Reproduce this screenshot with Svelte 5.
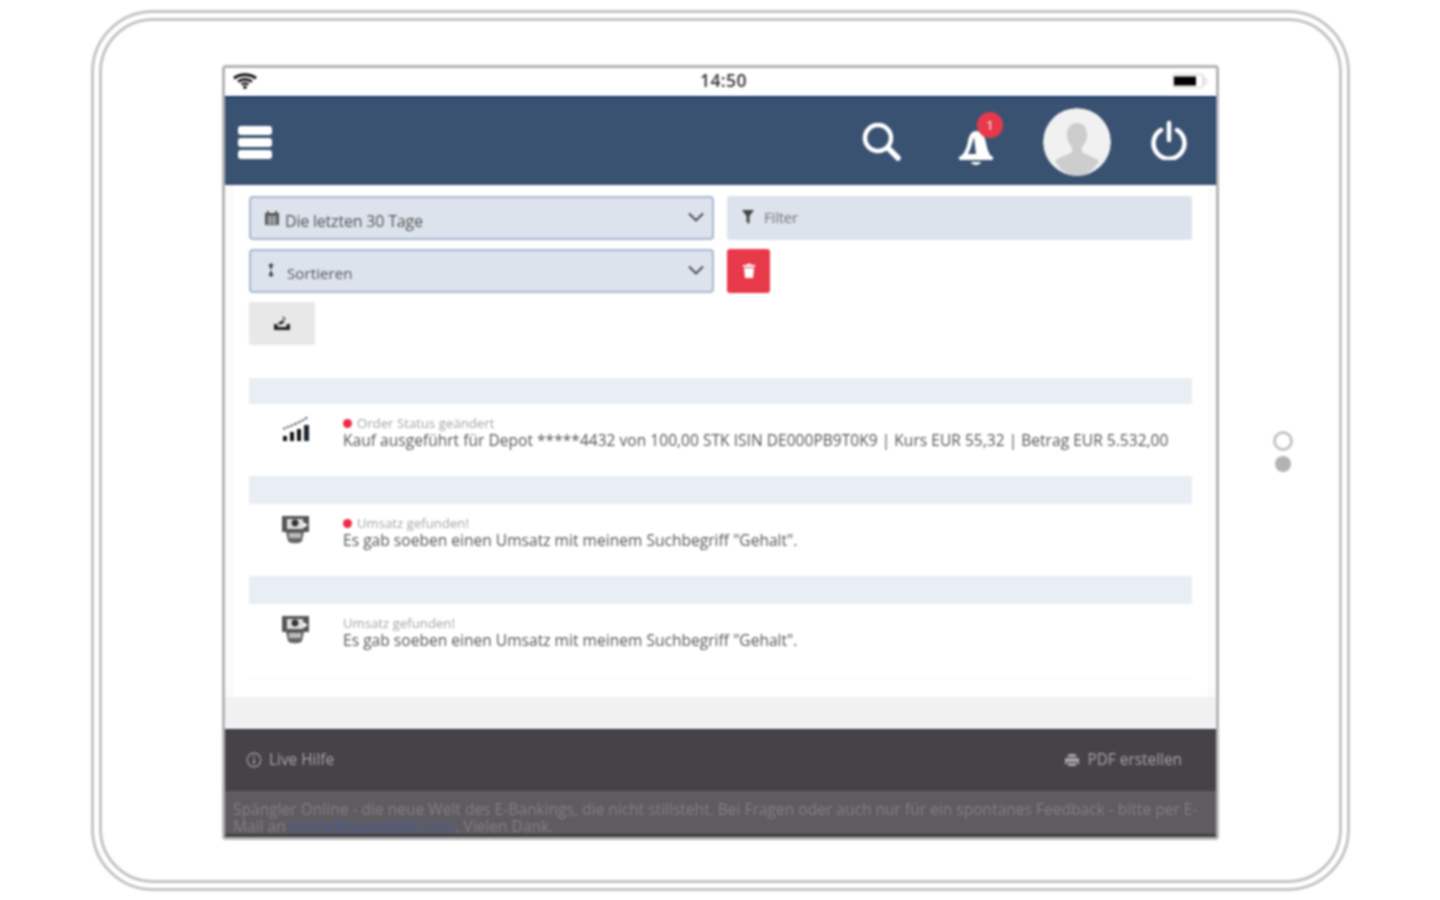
<script>
  const rows = [
    { unread: true, icon: 'chart', label: 'Order Status geändert', text: 'Kauf ausgeführt für Depot *****4432 von 100,00 STK ISIN DE000PB9T0K9 | Kurs EUR 55,32 | Betrag EUR 5.532,00' },
    { unread: true, icon: 'bank', label: 'Umsatz gefunden!', text: 'Es gab soeben einen Umsatz mit meinem Suchbegriff "Gehalt".' },
    { unread: false, icon: 'bank', label: 'Umsatz gefunden!', text: 'Es gab soeben einen Umsatz mit meinem Suchbegriff "Gehalt".' }
  ];
</script>

<div class="page">
  <div class="outer">
    <div class="inner">
      <div class="screen">
        <div class="status">
          <svg class="wifi" viewBox="0 0 24 16" width="24" height="16" aria-hidden="true">
            <path d="M1 5.2C7 .5 17 .5 23 5.2" fill="none" stroke="#111" stroke-width="3"/>
            <path d="M5 8.6C9 5.6 15 5.6 19 8.6" fill="none" stroke="#111" stroke-width="2.8"/>
            <path d="M8.5 11.4C10.6 10.2 13.4 10.2 15.5 11.4" fill="none" stroke="#111" stroke-width="2.4"/>
            <circle cx="12" cy="14.2" r="1.8" fill="#111"/>
          </svg>
          <span class="time">14:50</span>
          <svg class="battery" viewBox="0 0 38 16" width="38" height="16" aria-hidden="true">
            <rect x="1" y="1.5" width="30" height="13" rx="2" fill="#fff" stroke="#ddd" stroke-width="1.5"/>
            <rect x="2" y="3.5" width="22" height="9" fill="#000"/>
            <path d="M32 4l4 4-4 4z" fill="#fff" stroke="#ccc"/>
          </svg>
        </div>

        <header class="topbar">
          <div class="burger"><i></i><i></i><i></i></div>
          <div class="actions">
            <svg class="search" viewBox="0 0 40 40" width="40" height="40" aria-hidden="true">
              <circle cx="17" cy="16" r="13" fill="none" stroke="#fff" stroke-width="4.5"/>
              <path d="M27 26l10 10" stroke="#fff" stroke-width="5.5" stroke-linecap="round"/>
            </svg>
            <div class="bell">
              <svg viewBox="0 0 36 42" width="36" height="42" aria-hidden="true">
                <path d="M2 32c4-3 7-9 8-16 1-6 4-10 8-10 5 0 9 5 10 12 1 6 3 11 6 14z" fill="#fff"/>
                <path d="M16 12c-2 6-3 11-6 17h8z" fill="#3a5272"/>
                <rect x="1" y="31" width="34" height="4" rx="1.5" fill="#fff"/>
                <path d="M13 37h10c-1 4-9 4-10 0z" fill="#fff"/>
              </svg>
              <span class="badge">1</span>
            </div>
            <div class="avatar">
              <svg viewBox="0 0 68 68" width="68" height="68" aria-hidden="true">
                <circle cx="34" cy="34" r="34" fill="#f1f1f1"/>
                <path d="M34 15c-7 0-10 5-10 12 0 5 2 9 5 12v5c-4 3-13 5-17 9 5 9 13 15 22 15s17-6 22-15c-4-4-13-6-17-9v-5c3-3 5-7 5-12 0-7-3-12-10-12z" fill="#cdcdcd"/>
              </svg>
            </div>
            <svg class="power" viewBox="0 0 38 40" width="38" height="40" aria-hidden="true">
              <path d="M11 10a15.5 15.5 0 1 0 16 0" fill="none" stroke="#fff" stroke-width="4.5" stroke-linecap="round"/>
              <path d="M19 3v17" stroke="#fff" stroke-width="4.5" stroke-linecap="round"/>
            </svg>
          </div>
        </header>

        <main class="content">
          <div class="panel">
            <div class="controls">
              <div class="select">
                <svg viewBox="0 0 16 16" width="16" height="16" aria-hidden="true">
                  <path d="M1 3h14v12H1z" fill="#555"/>
                  <path d="M4 1v3M12 1v3" stroke="#555" stroke-width="2"/>
                  <path d="M3 7h10M3 10h10M3 13h10M6 6v8M10 6v8" stroke="#cfd4dc" stroke-width="1"/>
                </svg>
                <span class="sel-a">Die letzten 30 Tage</span>
                <svg class="chev" viewBox="0 0 16 10" width="16" height="10" aria-hidden="true"><path d="M1 1.5l7 7 7-7" fill="none" stroke="#444" stroke-width="1.8"/></svg>
              </div>
              <div class="filter">
                <svg viewBox="0 0 12 14" width="12" height="14" aria-hidden="true"><path d="M0 0h12L7.5 6v8l-3-2V6z" fill="#444"/></svg>
                <span>Filter</span>
              </div>
              <div class="select">
                <svg class="sort" viewBox="0 0 8 14" width="8" height="14" aria-hidden="true"><path d="M4 0l3 3H5v3H3V3H1zM4 14l3-3H5V8H3v3H1z" fill="#333"/></svg>
                <span class="sel-b">Sortieren</span>
                <svg class="chev" viewBox="0 0 16 10" width="16" height="10" aria-hidden="true"><path d="M1 1.5l7 7 7-7" fill="none" stroke="#444" stroke-width="1.8"/></svg>
              </div>
              <div class="trash">
                <svg viewBox="0 0 14 15" width="14" height="15" aria-hidden="true"><path d="M1 2h4V.8h4V2h4v2H1zM2 5h10l-1 10H3z" fill="#fff"/></svg>
              </div>
              <div class="tool">
                <svg viewBox="0 0 18 16" width="18" height="16" aria-hidden="true">
                  <path d="M1 9h3l1 3h8l1-3h3v6H1z" fill="#222"/>
                  <path d="M5 8l5-3 1.5 2.5-5 2.5zM9 1l4 3-2 1z" fill="#222"/>
                </svg>
              </div>
            </div>

            <div class="list">
              {#each rows as row, i}
                <div class="band" class:tall={i > 0}></div>
                <div class="row">
                  <div class="ico">
                    {#if row.icon === 'chart'}
                      <svg viewBox="0 0 30 28" width="30" height="28" aria-hidden="true">
                        <path d="M2 14C10 11 18 8 27 2" fill="none" stroke="#555" stroke-width="1.6" stroke-dasharray="3 1"/>
                        <rect x="2" y="21" width="4" height="5" fill="#111"/>
                        <rect x="9" y="17" width="4" height="9" fill="#111"/>
                        <rect x="16" y="14" width="4" height="12" fill="#111"/>
                        <rect x="23" y="10" width="5" height="16" fill="#1d2730"/>
                      </svg>
                    {:else}
                      <svg viewBox="0 0 30 30" width="30" height="30" aria-hidden="true">
                        <rect x="1" y="1" width="27" height="16" fill="#555"/>
                        <rect x="6" y="4" width="16" height="10" fill="#ddd"/>
                        <circle cx="14" cy="8" r="3.4" fill="#333"/>
                        <path d="M22 7l5 3-5 3z" fill="#fff"/>
                        <path d="M5 17h18l-2 9c-1 3-13 3-14 0z" fill="#666"/>
                        <rect x="8" y="18" width="12" height="5" fill="#bbb"/>
                      </svg>
                    {/if}
                  </div>
                  <div class="txt">
                    <div class="label">{#if row.unread}<span class="dot"></span>{/if}{row.label}</div>
                    <div class="body">{row.text}</div>
                  </div>
                </div>
              {/each}
              <div class="rule"></div>
            </div>
          </div>
        </main>

        <footer class="foot">
          <div class="foot-item">
            <svg viewBox="0 0 16 16" width="16" height="16" aria-hidden="true">
              <circle cx="8" cy="8" r="6.8" fill="none" stroke="#a5a3a6" stroke-width="1.2"/>
              <path d="M8 4v1.6M8 7v5" stroke="#a5a3a6" stroke-width="1.6"/>
            </svg>
            <span>Live Hilfe</span>
          </div>
          <div class="foot-item">
            <svg viewBox="0 0 16 14" width="16" height="14" aria-hidden="true">
              <path d="M4 1h8v3H4zM1 5h14v6h-2V9H3v2H1zM4 10h8v3H4z" fill="#a5a3a6"/>
            </svg>
            <span>PDF erstellen</span>
          </div>
        </footer>
        <div class="note">Spängler Online - die neue Welt des E-Bankings, die nicht stillsteht. Bei Fragen oder auch nur für ein spontanes Feedback - bitte per E-Mail an <a href="#top">online@spaengler.com</a>. Vielen Dank.</div>
      </div>

      <div class="home"><span class="ring"></span><span class="disc"></span></div>
    </div>
  </div>
</div>

<style>
  :global(body) { margin: 0; background: #fff; }
  * { box-sizing: border-box; }
  .page {
    width: 1440px;
    height: 900px;
    padding: 10px 0 0 91px;
    overflow: hidden;
    font-family: "Open Sans", "Liberation Sans", sans-serif;
    filter: blur(0.8px);
  }
  .outer {
    width: 1259px;
    height: 881px;
    border: 3px solid #c4c4c4;
    border-radius: 62px;
    padding: 5px;
  }
  .inner {
    height: 100%;
    border: 3px solid #c4c4c4;
    border-radius: 54px;
    display: flex;
    align-items: flex-start;
    padding: 44px 0 0 120px;
  }
  .screen {
    width: 997px;
    height: 775px;
    flex: none;
    border: 3px solid #b4b4b4;
    border-radius: 4px;
    display: flex;
    flex-direction: column;
    background: #fff;
  }
  .status {
    height: 28px;
    flex: none;
    position: relative;
    display: flex;
    align-items: center;
    justify-content: space-between;
    padding: 0 6px 2px 8px;
  }
  .time {
    position: absolute;
    left: 475px;
    top: 0;
    font-size: 17.5px;
    font-weight: 600;
    line-height: 24px;
    letter-spacing: .4px;
    color: #333;
  }
  .topbar {
    height: 89px;
    flex: none;
    background: #3a5272;
    border-top: 2px solid #123a6c;
    border-right: 1px solid #123a6c;
    display: flex;
    align-items: center;
    justify-content: space-between;
    padding: 0 27px 0 13px;
  }
  .burger { width: 34px; display: flex; flex-direction: column; gap: 3px; margin-top: 2px; }
  .burger i { display: block; height: 9px; background: #fff; border-radius: 3px; }
  .actions { display: flex; align-items: center; }
  .search { margin: 0 2px 0 0; }
  .bell { position: relative; width: 36px; height: 42px; margin: 8px 8px 0 55px; }
  .badge {
    position: absolute;
    left: 19px;
    top: -13px;
    width: 26px;
    height: 26px;
    border-radius: 50%;
    background: #e8394b;
    color: #fff;
    font-size: 13px;
    line-height: 26px;
    text-align: center;
  }
  .avatar { width: 68px; height: 68px; margin: 0 39px 0 41px; border-radius: 50%; overflow: hidden; }
  .avatar svg { display: block; }
  .power { margin-bottom: 3px; }
  .content {
    flex: 1;
    min-height: 0;
    background: #fbfbfb;
    border-bottom: 32px solid #f1f1f1;
    padding: 0 9px 0 8px;
    display: flex;
  }
  .panel { flex: 1; background: #fff; padding: 11px 16px 0; }
  .controls {
    display: grid;
    grid-template-columns: 465px 465px;
    grid-template-rows: 44px 44px 43px;
    gap: 9px 13px;
  }
  .select {
    background: #dce3ed;
    border: 2px solid #aab7d0;
    border-radius: 4px;
    display: flex;
    align-items: center;
    padding: 0 8px 0 13px;
    font-size: 16px;
    color: #555;
  }
  .sel-a { margin: 5px 0 0 5px; letter-spacing: -.2px; }
  .sel-b { margin: 3px 0 0 12px; font-size: 15px; letter-spacing: .1px; }
  .sort { margin-left: 3px; margin-top: -2px; }
  .chev { margin-left: auto; margin-right: 0; margin-top: -2px; }
  .filter {
    background: #dce3ed;
    border-radius: 3px;
    display: flex;
    align-items: center;
    gap: 10px;
    padding: 0 0 2px 15px;
    font-size: 15px;
    color: #777;
    letter-spacing: -.2px;
  }
  .trash {
    width: 43px;
    background: #e8394b;
    border-radius: 3px;
    display: flex;
    align-items: center;
    justify-content: center;
    padding-bottom: 2px;
  }
  .tool {
    width: 66px;
    background: #e8e8e8;
    border-radius: 2px;
    display: flex;
    align-items: center;
    justify-content: center;
    padding-bottom: 2px;
  }
  .list { margin-top: 33px; }
  .band { height: 26px; background: #e9eef5; }
  .band.tall { height: 28px; }
  .row { height: 72px; display: flex; padding-top: 11px; }
  .ico { width: 94px; padding-left: 32px; flex: none; }
  .ico svg { display: block; }
  .label { font-size: 13px; line-height: 17px; color: #a3a3a3; letter-spacing: .1px; display: flex; align-items: center; }
  .dot { width: 9px; height: 9px; border-radius: 50%; background: #ee2c44; margin-right: 5px; }
  .body { font-size: 15.5px; line-height: 17px; color: #555; letter-spacing: .04px; white-space: nowrap; }
  .rule { height: 1px; background: #f5f5f5; margin-top: 2px; }
  .foot {
    height: 62px;
    flex: none;
    background: #454347;
    border-top: 1px solid #2f2d30;
    display: flex;
    align-items: center;
    justify-content: space-between;
    padding: 0 34px 2px 21px;
    color: #a5a3a6;
    font-size: 15.4px;
  }
  .foot-item { display: flex; align-items: center; gap: 7px; }
  .note {
    height: 46px;
    flex: none;
    background: #5e5c61;
    border-bottom: 3px solid #403e42;
    padding: 10px 7px 0 8px;
    font-size: 15.55px;
    line-height: 17px;
    color: #827f84;
    overflow: hidden;
  }
  .note a { color: #4a5b95; text-decoration: none; }
  .home { display: flex; flex-direction: column; align-items: center; gap: 5px; margin: 366px 0 0 54px; }
  .ring { width: 20px; height: 20px; border: 3px solid #c4c4c4; border-radius: 50%; }
  .disc { width: 16px; height: 16px; background: #b3b3b3; border-radius: 50%; }
</style>
